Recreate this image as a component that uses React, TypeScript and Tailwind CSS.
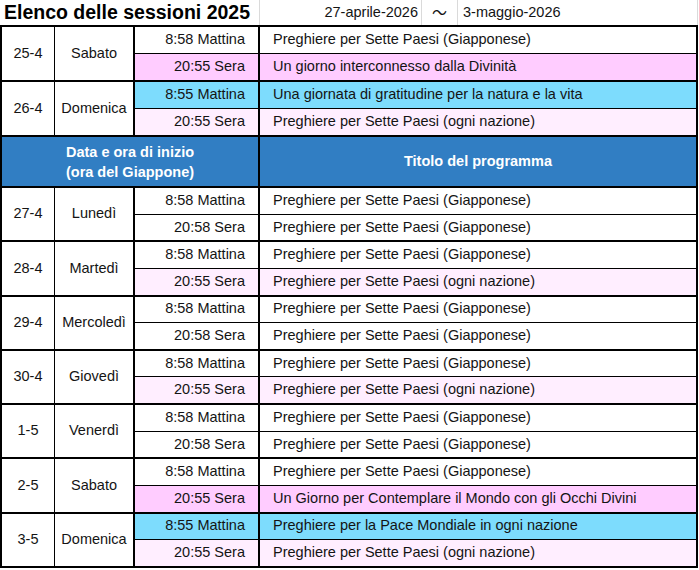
import React from 'react';

type Slot = {
  time: string;
  title: string;
  tone: 'white' | 'pink' | 'light' | 'cyan';
};

type Day = {
  date: string;
  day: string;
  slots: [Slot, Slot];
};

const G = 'Preghiere per Sette Paesi (Giapponese)';
const OGNI = 'Preghiere per Sette Paesi (ogni nazione)';

const topDays: Day[] = [
  {
    date: '25-4',
    day: 'Sabato',
    slots: [
      { time: '8:58 Mattina', title: G, tone: 'white' },
      { time: '20:55 Sera', title: 'Un giorno interconnesso dalla Divinità', tone: 'pink' },
    ],
  },
  {
    date: '26-4',
    day: 'Domenica',
    slots: [
      { time: '8:55 Mattina', title: 'Una giornata di gratitudine per la natura e la vita', tone: 'cyan' },
      { time: '20:55 Sera', title: OGNI, tone: 'light' },
    ],
  },
];

const weekDays: Day[] = [
  {
    date: '27-4',
    day: 'Lunedì',
    slots: [
      { time: '8:58 Mattina', title: G, tone: 'white' },
      { time: '20:58 Sera', title: G, tone: 'white' },
    ],
  },
  {
    date: '28-4',
    day: 'Martedì',
    slots: [
      { time: '8:58 Mattina', title: G, tone: 'white' },
      { time: '20:55 Sera', title: OGNI, tone: 'light' },
    ],
  },
  {
    date: '29-4',
    day: 'Mercoledì',
    slots: [
      { time: '8:58 Mattina', title: G, tone: 'white' },
      { time: '20:58 Sera', title: G, tone: 'white' },
    ],
  },
  {
    date: '30-4',
    day: 'Giovedì',
    slots: [
      { time: '8:58 Mattina', title: G, tone: 'white' },
      { time: '20:55 Sera', title: OGNI, tone: 'light' },
    ],
  },
  {
    date: '1-5',
    day: 'Venerdì',
    slots: [
      { time: '8:58 Mattina', title: G, tone: 'white' },
      { time: '20:58 Sera', title: G, tone: 'white' },
    ],
  },
  {
    date: '2-5',
    day: 'Sabato',
    slots: [
      { time: '8:58 Mattina', title: G, tone: 'white' },
      { time: '20:55 Sera', title: 'Un Giorno per Contemplare il Mondo con gli Occhi Divini', tone: 'pink' },
    ],
  },
  {
    date: '3-5',
    day: 'Domenica',
    slots: [
      { time: '8:55 Mattina', title: 'Preghiere per la Pace Mondiale in ogni nazione', tone: 'cyan' },
      { time: '20:55 Sera', title: OGNI, tone: 'light' },
    ],
  },
];

const toneClass = {
  white: 'bg-white',
  pink: 'bg-[#ffccff]',
  light: 'bg-[#ffeeff]',
  cyan: 'bg-[#7ddcfd]',
};

// row heights include the 1px divider on the first row (border-box)
function DayGroup({ d, tall, last }: { d: Day; tall?: boolean; last?: boolean }) {
  const heights = tall ? ['h-[27px]', 'h-[26px]'] : ['h-[26.64px]', 'h-[25.64px]'];
  return (
    <div className={`flex ${last ? '' : 'border-b-2 border-black'}`}>
      <div className="w-[53px] shrink-0 border-r border-black flex items-center justify-center">{d.date}</div>
      <div className="w-[80px] shrink-0 border-r-2 border-black flex items-center justify-center">{d.day}</div>
      <div className="flex-1 flex flex-col">
        {d.slots.map((s, i) => (
          <div key={i} className={`flex ${heights[i]} ${i === 0 ? 'border-b border-black' : ''} ${toneClass[s.tone]}`}>
            <div className="w-[125px] shrink-0 border-r-2 border-black flex items-center justify-end pr-[13px]">
              {s.time}
            </div>
            <div className="flex-1 flex items-center pl-[13px] whitespace-nowrap">{s.title}</div>
          </div>
        ))}
      </div>
    </div>
  );
}

export default function App() {
  return (
    <div className="w-[699px] h-[570px] bg-white text-[14.5px] text-[#141414]" style={{ fontFamily: '"Liberation Sans", Arial, sans-serif' }}>
      <div className="flex h-[25px] w-[698px]">
        <div className="w-[260px] shrink-0 border-r border-[#dadada] flex items-center pl-[4px] text-[19.5px] font-bold text-black">
          Elenco delle sessioni 2025
        </div>
        <div className="w-[162px] shrink-0 border-r border-[#dadada] flex items-center justify-end pr-[3px]">
          27-aprile-2026
        </div>
        <div
          className="w-[36px] shrink-0 border-r border-[#dadada] flex items-center justify-center text-[15px]"
          style={{ fontFamily: '"Noto Sans CJK JP", sans-serif' }}
        >
          ～
        </div>
        <div className="flex-1 border-r border-[#dadada] flex items-center pl-[5px]">3-maggio-2026</div>
      </div>

      <div className="w-[698px] border-2 border-black">
        {topDays.map((d) => (
          <DayGroup key={d.date} d={d} tall />
        ))}

        <div className="flex h-[51px] border-b-2 border-black bg-[#317ec3] text-white font-bold">
          <div className="w-[258px] shrink-0 border-r-2 border-black flex flex-col items-center justify-center leading-[20px]">
            <span>Data e ora di inizio</span>
            <span>(ora del Giappone)</span>
          </div>
          <div className="flex-1 flex items-center justify-center">Titolo del programma</div>
        </div>

        {weekDays.map((d, i) => (
          <DayGroup key={d.date} d={d} last={i === weekDays.length - 1} />
        ))}
      </div>
    </div>
  );
}
